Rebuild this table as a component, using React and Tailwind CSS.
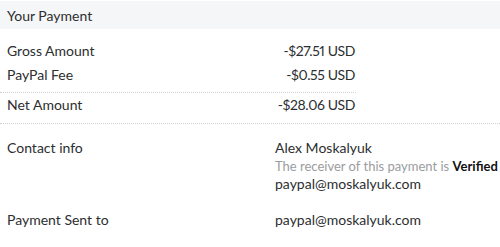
export default function App() {
  const font = { fontFamily: 'Lato, "Open Sans", sans-serif' };
  return (
    <div className="w-[500px] h-[247px] bg-white text-[#2c2e2f] overflow-hidden" style={font}>
      {/* Header */}
      <div className="mt-[1px] h-[28px] bg-[#f5f6f8] px-[7px] flex items-center text-[14px]">
        Your Payment
      </div>

      {/* Amounts */}
      <div className="w-[356px] mt-[10px] text-[14px] leading-[24px]">
        <div className="flex justify-between pl-[7px] pr-[1px]">
          <span>Gross Amount</span>
          <span className="proportional-nums tracking-[-0.4px]">-$27.51 USD</span>
        </div>
        <div className="flex justify-between pl-[7px] pr-[1px]">
          <span>PayPal Fee</span>
          <span className="proportional-nums tracking-[-0.4px]">-$0.55 USD</span>
        </div>
        <div className="mt-[5px] border-t border-dotted border-[#cfd1d4] pb-[6px] flex justify-between pl-[7px] pr-[1px]">
          <span>Net Amount</span>
          <span className="proportional-nums tracking-[-0.4px]">-$28.06 USD</span>
        </div>
      </div>

      {/* Contact */}
      <div className="border-t border-dotted border-[#cfd1d4] pt-[12px] text-[14px]">
        <div className="flex items-start px-[7px]">
          <div className="w-[268px] shrink-0 leading-[24px]">Contact info</div>
          <div className="mt-[3px] flex flex-col whitespace-nowrap leading-[18px]">
            <span>Alex Moskalyuk</span>
            <span className="text-[13px] text-[#9b9c9e]">
              The receiver of this payment is <b className="text-[#111] font-bold">Verified</b>
            </span>
            <span>paypal@moskalyuk.com</span>
          </div>
        </div>
        <div className="flex px-[7px] mt-[15px] leading-[24px]">
          <div className="w-[268px] shrink-0">Payment Sent to</div>
          <div>paypal@moskalyuk.com</div>
        </div>
      </div>
    </div>
  );
}
